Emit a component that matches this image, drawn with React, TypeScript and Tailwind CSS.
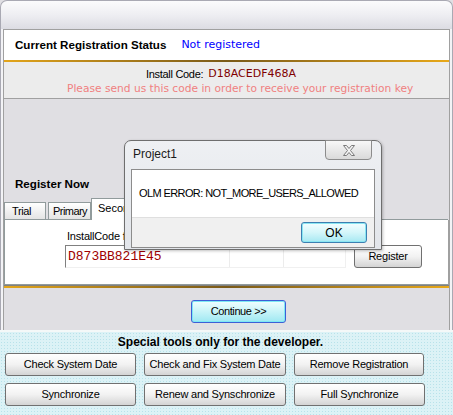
import React from "react";

const sans = "font-['Liberation_Sans',Arial,sans-serif]";
const verdana = "font-['DejaVu_Sans',Verdana,sans-serif]";

function XpButton({ label, className }: { label: string; className: string }) {
  return (
    <button
      className={`h-[23px] rounded-[3px] border border-[#707070] bg-gradient-to-b from-[#ffffff] via-[#f2f2f2] to-[#d4d4d4] text-[11px] tracking-[-0.22px] whitespace-nowrap text-black ${sans} ${className}`}
    >
      {label}
    </button>
  );
}

function CloseGlyph() {
  return (
    <svg width="14" height="11" viewBox="0 0 14 11">
      <path
        d="M1.5 0.5h3l2.5 3 2.5-3h3l-4 5 4 5h-3L7 7.5l-2.5 3h-3l4-5z"
        fill="#f4f4f4"
        stroke="#7a7a7a"
        strokeWidth="1"
        strokeLinejoin="round"
      />
    </svg>
  );
}

export default function App() {
  return (
    <div className={`w-[453px] h-[415px] relative overflow-hidden bg-[#e0dfe3] text-black ${sans}`}>
      {/* window frame top */}
      <div className="h-[29px] rounded-t-[7px] border border-b-0 border-[#a9a9b3] bg-gradient-to-b from-[#fbfbfc] via-[#eeeef2] to-[#dcdce3]" />

      {/* window body */}
      <div className="h-[301px] border-x border-[#a9a9b3] px-[2px] bg-[#f3f3f6]">
        <div className="h-full flex flex-col border-x border-[#a0a0a0] bg-[#e0dfe3]">
          {/* status */}
          <div className="h-[31px] flex items-center bg-white border-t border-[#a0a0a0] pl-[11px]">
            <span className="text-[11.6px] font-bold">Current Registration Status</span>
            <span className={`ml-[15px] text-[11px] text-[#0000ff] ${verdana}`}>Not registered</span>
          </div>
          <div className="h-[2px] bg-gradient-to-r from-[#e3a51a] via-[#7a5a18] to-[#e8a818]" />

          {/* install code band */}
          <div className="h-[37px] bg-[#ececec] border-b border-[#a0a0a0] flex flex-col pt-[5px]">
            <div className="flex items-center ml-[142px] h-[14px]">
              <span className="text-[11px] tracking-[-0.3px]">Install Code:</span>
              <span className={`ml-[5px] text-[11px] text-[#800000] ${verdana}`}>D18ACEDF468A</span>
            </div>
            <div className={`ml-[63px] mt-[1px] text-[10.65px] leading-[14px] whitespace-nowrap text-[#f08080] ${verdana}`}>
              Please send us this code in order to receive your registration key
            </div>
          </div>

          {/* register section */}
          <div className="flex-1 flex flex-col">
            <div className="mt-[78px] ml-[11px] text-[11.6px] font-bold leading-[14px]">Register Now</div>
            <div className="mt-[7px] flex items-end h-[22px]">
              <div className="w-[42px] h-[18px] border border-[#919b9c] bg-gradient-to-b from-white to-[#e4e4e4] text-[11px] tracking-[-0.4px] flex items-center pl-[7px]">
                Trial
              </div>
              <div className="w-[2px] h-px bg-[#919b9c]" />
              <div className="w-[43px] h-[18px] border border-[#919b9c] bg-gradient-to-b from-white to-[#e4e4e4] text-[11px] tracking-[-0.55px] whitespace-nowrap flex items-center pl-[4px]">
                Primary
              </div>
              <div className="w-[70px] h-[22px] border border-b-0 border-[#919b9c] bg-white text-[11px] flex items-center pl-[6px] pb-[3px]">
                Secondary
              </div>
            </div>
            <div className="h-[65px] bg-white border border-t-0 border-[#919b9c] border-r-[#a0a0a0] relative">
              <div className="absolute left-0 right-0 top-[-1px] h-px bg-[#919b9c] ml-[157px]" />
              <div className="pl-[62px] pt-[10px] text-[11px] leading-[13px] tracking-[-0.2px]">InstallCode for Secondary</div>
              <div className="flex items-center mt-[2px]">
                <div className="ml-[60px] w-[281px] h-[23px] border border-[#808080] border-b-[#f0f0f0] border-r-[#f0f0f0] bg-white flex items-center relative">
                  <span className="pl-[2px] font-['Liberation_Mono',monospace] text-[13px] text-[#a00000]">D873BB821E45</span>
                  <div className="absolute top-0 bottom-0 left-[163px] w-px bg-[#ececec]" />
                  <div className="absolute top-0 bottom-0 left-[217px] w-px bg-[#ececec]" />
                </div>
                <XpButton label="Register" className="ml-[8px] w-[68px] h-[22px]" />
              </div>
            </div>
            <div className="h-px bg-[#808080]" />
            <div className="h-[2px] bg-gradient-to-r from-[#e3a51a] via-[#7a5a18] to-[#e8a818]" />
            <div className="pt-[10px] pl-[187px]">
              <button className="w-[95px] h-[23px] rounded-[3px] border border-[#3d5fd6] bg-gradient-to-b from-[#f0feff] via-[#c8f4f8] to-[#9ee8f2] shadow-[inset_0_0_0_1px_#7ee8f4] text-[11px] tracking-[-0.4px]">
                Continue &gt;&gt;
              </button>
            </div>
          </div>
        </div>
      </div>

      {/* developer tools */}
      <div className="h-[85px] border-t-2 border-[#f4f8f8] bg-[#dcf2f6] bg-[radial-gradient(#b8e2ea_0.8px,transparent_1px)] [background-size:3px_3px]">
        <div className="text-center pr-[12px] mt-[3px] text-[12px] font-bold leading-[15px]">
          Special tools only for the developer.
        </div>
        <div className="flex gap-[8px] ml-[5px] mt-[3px]">
          <XpButton label="Check System Date" className="w-[131px]" />
          <XpButton label="Check and Fix System Date" className="w-[142px]" />
          <XpButton label="Remove Registration" className="w-[130px]" />
        </div>
        <div className="flex gap-[8px] ml-[5px] mt-[7px]">
          <XpButton label="Synchronize" className="w-[131px]" />
          <XpButton label="Renew and Synschronize" className="w-[142px]" />
          <XpButton label="Full Synchronize" className="w-[131px]" />
        </div>
      </div>

      {/* message box */}
      <div className="absolute left-[124px] top-[140px] w-[258px] h-[110px] rounded-t-[7px] border border-[#6e6e6e] bg-gradient-to-b from-[#eef0f3] to-[#e2e5ea] shadow-[1px_1px_3px_rgba(0,0,0,0.25)]">
        <div className="absolute left-[8px] top-[6px] text-[12px] leading-[14px] text-[#1a1a1a]">Project1</div>
        <div className="absolute right-[9px] top-[-1px] w-[47px] h-[20px] rounded-b-[4px] border border-[#8c8c8c] bg-gradient-to-b from-[#f8f8f8] to-[#dadada] flex items-center justify-center">
          <CloseGlyph />
        </div>
        <div className="absolute left-[6px] right-[6px] top-[28px] bottom-[1px] border border-[#8c8c8c] flex flex-col">
          <div className="h-[47px] bg-white flex items-center pl-[7px] text-[11px] tracking-[-0.6px] whitespace-nowrap">
            OLM ERROR: NOT_MORE_USERS_ALLOWED
          </div>
          <div className="flex-1 bg-[#f0f0f0] border-t border-[#dfdfdf] flex justify-end pr-[7px] pt-[4px]">
            <button className="w-[66px] h-[21px] rounded-[3px] border border-[#3c7fb1] bg-gradient-to-b from-[#f4feff] via-[#d4f6fa] to-[#a6e8f2] shadow-[inset_0_0_0_1px_#8ae6f2] text-[12px]">
              OK
            </button>
          </div>
        </div>
      </div>
    </div>
  );
}
